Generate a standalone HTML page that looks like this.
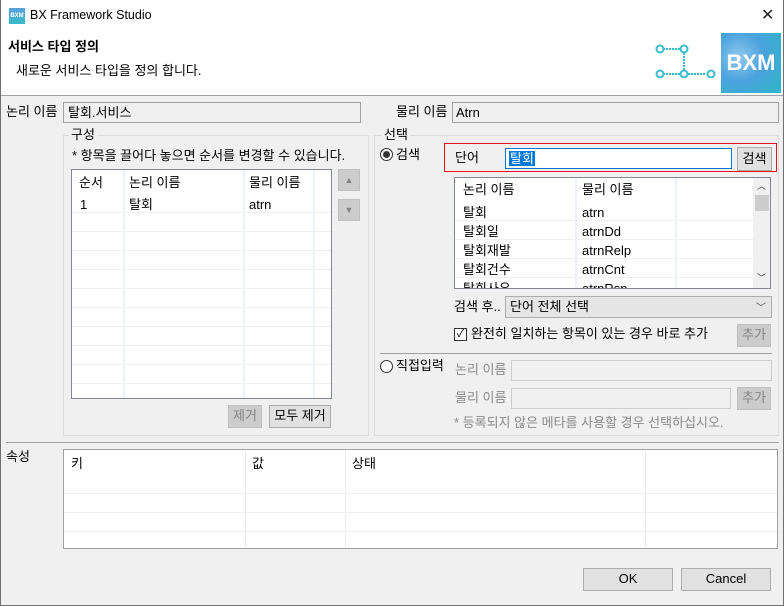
<!DOCTYPE html>
<html><head><meta charset="utf-8"><style>
*{box-sizing:border-box;margin:0;padding:0}
body{width:784px;height:606px;position:relative;background:#f0f0f0;font-family:"Liberation Sans","Noto Sans CJK KR","NanumGothic",sans-serif;font-size:13px;color:#000;overflow:hidden}
.a{position:absolute;white-space:nowrap}
.t{line-height:15px}
.inp{position:absolute;border:1px solid #a0a0a0;background:#f0f0f0}
.btn{position:absolute;border:1px solid #adadad;background:#e1e1e1;text-align:center;line-height:20px}
.dis{background:#cccccc;border-color:#bfbfbf;color:#838383}
.grp{position:absolute;border:1px solid #dcdcdc}
.leg{position:absolute;background:#f0f0f0;padding:0 2px;line-height:15px}
.g{color:#8a8a8a}
.rows{position:absolute;left:0;background:repeating-linear-gradient(#fff 0 18px,#f0f0f0 18px 19px)}
</style></head><body>
<!-- title -->
<div class="a" style="left:0;top:0;width:784px;height:95px;background:#fff"></div>
<div class="a" style="left:9px;top:8px;width:16px;height:16px;background:linear-gradient(#5aa0dc,#35bdc8);color:#fff;font-size:6px;line-height:16px;text-align:center;font-weight:bold">BXM</div>
<div class="a t" style="left:30px;top:8px;font-size:12.5px">BX Framework Studio</div>
<div class="a" style="left:761px;top:8px;font-size:16px;line-height:16px;color:#222">✕</div>
<div class="a t" style="left:8px;top:39px;font-weight:bold">서비스 타입 정의</div>
<div class="a t" style="left:16px;top:63px">새로운 서비스 타입을 정의 합니다.</div>
<svg class="a" style="left:655px;top:42px" width="66" height="36">
<g stroke="#3bbccd" stroke-width="2" fill="#fff">
<line x1="8" y1="7" x2="25" y2="7" stroke-dasharray="2 1"/><line x1="29" y1="11" x2="29" y2="28" stroke-dasharray="2 1"/>
<line x1="8" y1="32" x2="25" y2="32" stroke-dasharray="2 1"/><line x1="33" y1="32" x2="51" y2="32" stroke-dasharray="2 1"/>
<circle cx="5" cy="7" r="3.5"/><circle cx="29" cy="7" r="3.5"/><circle cx="5" cy="32" r="3.5"/><circle cx="29" cy="32" r="3.5"/><circle cx="56" cy="32" r="3.5"/></g></svg>
<div class="a" style="left:721px;top:33px;width:60px;height:60px;background:radial-gradient(circle at 30% 40%,#8fc8ee,#4aa2dd 45%,#2fb6c8);color:#fff;font-weight:bold;font-size:22px;line-height:60px;text-align:center">BXM</div>
<div class="a" style="left:0;top:95px;width:784px;height:1px;background:#a0a0a0"></div>
<div class="a" style="left:0;top:0;width:1px;height:606px;background:#707070"></div>
<div class="a" style="left:783px;top:0;width:1px;height:606px;background:#707070"></div>
<div class="a" style="left:0;top:605px;width:784px;height:1px;background:#707070"></div>

<!-- names -->
<div class="a t" style="left:6px;top:104px">논리 이름</div>
<div class="inp" style="left:63px;top:102px;width:298px;height:21px"><span class="a t" style="left:4px;top:2px">탈회.서비스</span></div>
<div class="a t" style="left:396px;top:104px">물리 이름</div>
<div class="inp" style="left:452px;top:102px;width:327px;height:21px"><span class="a t" style="left:3px;top:2px">Atrn</span></div>

<!-- 구성 -->
<div class="grp" style="left:63px;top:135px;width:306px;height:301px"></div>
<div class="leg" style="left:69px;top:127px">구성</div>
<div class="a t" style="left:72px;top:148px">* 항목을 끌어다 놓으면 순서를 변경할 수 있습니다.</div>
<div class="a" style="left:71px;top:169px;width:261px;height:230px;border:1px solid #828790;background:#fff;overflow:hidden">
<div class="rows" style="top:24px;width:259px;height:204px"></div>
<div class="a" style="left:0;top:0;width:259px;height:24px;background:#fff"></div>
<div class="a" style="left:51px;top:0;width:2px;height:228px;background:#eef2fa"></div>
<div class="a" style="left:171px;top:0;width:2px;height:228px;background:#eef2fa"></div>
<div class="a" style="left:241px;top:0;width:2px;height:228px;background:#eef2fa"></div>
<div class="a t" style="left:7px;top:5px">순서</div>
<div class="a t" style="left:57px;top:5px">논리 이름</div>
<div class="a t" style="left:177px;top:5px">물리 이름</div>
<div class="a t" style="left:8px;top:27px">1</div>
<div class="a t" style="left:57px;top:27px">탈회</div>
<div class="a t" style="left:177px;top:27px">atrn</div>
</div>
<div class="btn dis" style="left:338px;top:169px;width:22px;height:22px;font-size:9px;line-height:20px">▲</div>
<div class="btn dis" style="left:338px;top:199px;width:22px;height:22px;font-size:9px;line-height:20px">▼</div>
<div class="btn dis" style="left:228px;top:405px;width:34px;height:23px">제거</div>
<div class="btn" style="left:269px;top:405px;width:62px;height:23px">모두 제거</div>

<!-- 선택 -->
<div class="grp" style="left:374px;top:135px;width:405px;height:301px"></div>
<div class="leg" style="left:382px;top:127px">선택</div>
<div class="a" style="left:380px;top:148px;width:13px;height:13px;border:1px solid #333;border-radius:50%;background:#fff"><div style="margin:2px;width:7px;height:7px;border-radius:50%;background:#333"></div></div>
<div class="a t" style="left:396px;top:147px">검색</div>
<div class="a" style="left:444px;top:143px;width:333px;height:29px;border:1px solid #e81123"></div>
<div class="a t" style="left:455px;top:150px">단어</div>
<div class="a" style="left:505px;top:148px;width:227px;height:21px;border:1px solid #0078d7;background:#fff"><span class="a t" style="left:3px;top:2px;background:#0078d7;color:#fff;padding:0 1px">탈회</span></div>
<div class="btn" style="left:737px;top:147px;width:35px;height:24px;line-height:22px">검색</div>
<div class="a" style="left:454px;top:177px;width:317px;height:112px;border:1px solid #828790;background:#fff;overflow:hidden">
<div class="rows" style="top:24px;width:298px;height:90px"></div>
<div class="a" style="left:0;top:0;width:298px;height:24px;background:#fff"></div>
<div class="a" style="left:120px;top:0;width:2px;height:112px;background:#eef2fa"></div>
<div class="a" style="left:220px;top:0;width:2px;height:112px;background:#eef2fa"></div>
<div class="a t" style="left:8px;top:4px">논리 이름</div><div class="a t" style="left:127px;top:4px">물리 이름</div>
<div class="a t" style="left:8px;top:27px">탈회</div><div class="a t" style="left:127px;top:27px">atrn</div>
<div class="a t" style="left:8px;top:46px">탈회일</div><div class="a t" style="left:127px;top:46px">atrnDd</div>
<div class="a t" style="left:8px;top:65px">탈회재발</div><div class="a t" style="left:127px;top:65px">atrnRelp</div>
<div class="a t" style="left:8px;top:84px">탈회건수</div><div class="a t" style="left:127px;top:84px">atrnCnt</div>
<div class="a t" style="left:8px;top:103px">탈회사유</div><div class="a t" style="left:127px;top:103px">atrnRsn</div>
<div class="a" style="left:298px;top:0;width:17px;height:110px;background:#f0f0f0"></div>
<div class="a" style="left:300px;top:17px;width:14px;height:16px;background:#cdcdcd"></div>
<div class="a" style="left:302px;top:1px;font-size:9px;color:#444">︿</div>
<div class="a" style="left:302px;top:93px;font-size:9px;color:#444">﹀</div>
</div>
<div class="a t" style="left:454px;top:299px">검색 후..</div>
<div class="a" style="left:505px;top:296px;width:267px;height:22px;border:1px solid #adadad;background:#e5e5e5"><span class="a t" style="left:4px;top:2px">단어 전체 선택</span><span class="a" style="right:5px;top:2px;font-size:10px;color:#444">﹀</span></div>
<div class="a" style="left:454px;top:328px;width:13px;height:13px;border:1px solid #333;background:#fff;font-size:11px;line-height:11px;text-align:center">✓</div>
<div class="a t" style="left:471px;top:326px">완전히 일치하는 항목이 있는 경우 바로 추가</div>
<div class="btn dis" style="left:737px;top:324px;width:34px;height:23px">추가</div>
<div class="a" style="left:380px;top:353px;width:392px;height:1px;background:#a0a0a0"></div>
<div class="a" style="left:380px;top:360px;width:13px;height:13px;border:1px solid #333;border-radius:50%;background:#fff"></div>
<div class="a t" style="left:396px;top:358px">직접입력</div>
<div class="a t g" style="left:455px;top:362px">논리 이름</div>
<div class="inp" style="left:511px;top:360px;width:261px;height:21px;border-color:#ccc"></div>
<div class="a t g" style="left:455px;top:390px">물리 이름</div>
<div class="inp" style="left:511px;top:388px;width:220px;height:21px;border-color:#ccc"></div>
<div class="btn dis" style="left:737px;top:387px;width:34px;height:23px">추가</div>
<div class="a t g" style="left:454px;top:415px">* 등록되지 않은 메타를 사용할 경우 선택하십시오.</div>

<div class="a" style="left:6px;top:442px;width:773px;height:1px;background:#a0a0a0"></div>
<div class="a t" style="left:6px;top:449px">속성</div>
<div class="a" style="left:63px;top:449px;width:715px;height:100px;border:1px solid #a0a0a0;background:#fff;overflow:hidden">
<div class="rows" style="top:25px;width:713px;height:73px"></div>
<div class="a" style="left:0;top:0;width:713px;height:25px;background:#fff"></div>
<div class="a" style="left:181px;top:0;width:1px;height:98px;background:#eee"></div>
<div class="a" style="left:281px;top:0;width:1px;height:98px;background:#eee"></div>
<div class="a" style="left:581px;top:0;width:1px;height:98px;background:#eee"></div>
<div class="a t" style="left:7px;top:6px">키</div><div class="a t" style="left:188px;top:6px">값</div><div class="a t" style="left:288px;top:6px">상태</div>
</div>
<div class="btn" style="left:583px;top:568px;width:90px;height:23px">OK</div>
<div class="btn" style="left:681px;top:568px;width:90px;height:23px">Cancel</div>
</body></html>
